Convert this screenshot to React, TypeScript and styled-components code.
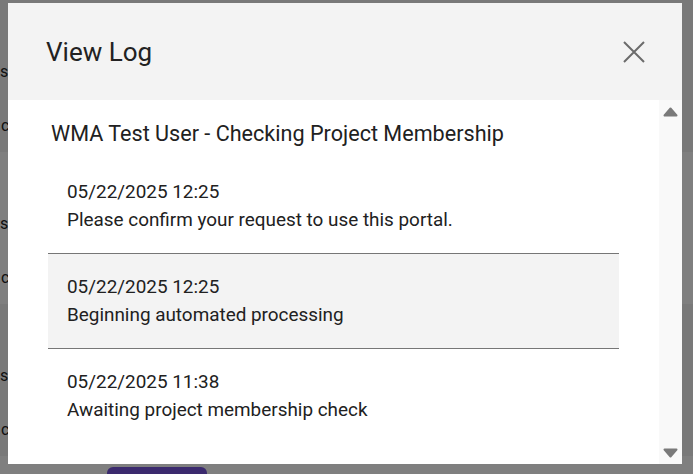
import React from "react";
import styled, { createGlobalStyle } from "styled-components";

const Global = createGlobalStyle`
  html, body { margin: 0; padding: 0; }
  body {
    width: 693px;
    height: 474px;
    overflow: hidden;
    font-family: Roboto, "Liberation Sans", sans-serif;
    background: #ffffff;
  }
`;

const Page = styled.div`
  display: flex;
  flex-direction: column;
  height: 474px;
  overflow: hidden;
`;

const PageRow = styled.div<{ $shade?: boolean }>`
  height: 152px;
  flex: none;
  display: flex;
  flex-direction: column;
  background: ${(p) => (p.$shade ? "#f2f2f2" : "#ffffff")};
  font-size: 16px;
  color: #222;
`;

const PageLabel = styled.div`
  margin-top: 62px;
  height: 20px;
  padding-left: 0;
  white-space: nowrap;
`;

const PageValue = styled.div`
  margin-top: 34px;
  padding-left: 1px;
  white-space: nowrap;
`;

const PageFooter = styled.div`
  padding: 11px 0 0 107px;
`;

const PageButton = styled.div`
  width: 100px;
  height: 36px;
  border-radius: 6px;
  background: #7754dc;
`;

const Overlay = styled.div`
  position: fixed;
  inset: 0;
  background: rgba(0, 0, 0, 0.5);
  padding: 3px 11px 10px 8px;
  display: flex;
`;

const Modal = styled.div`
  flex: 1;
  display: flex;
  flex-direction: column;
  background: #ffffff;
  overflow: hidden;
`;

const Header = styled.div`
  height: 97px;
  flex: none;
  background: #f3f3f3;
  display: flex;
  align-items: center;
  justify-content: space-between;
  padding: 0 37px 0 38px;
`;

const HeaderTitle = styled.h2`
  margin: 0;
  font-weight: 400;
  font-size: 26px;
  color: #222;
`;

const CloseButton = styled.button`
  border: 0;
  background: transparent;
  padding: 0;
  width: 22px;
  height: 22px;
  display: flex;
  cursor: pointer;
`;

const Body = styled.div`
  flex: 1;
  display: flex;
  min-height: 0;
`;

const Content = styled.div`
  flex: 1;
  overflow: hidden;
`;

const Title = styled.h3`
  margin: 0;
  padding: 22px 0 13px 43px;
  font-size: 21.6px;
  line-height: 24px;
  font-weight: 400;
  color: #212121;
`;

const List = styled.ul`
  list-style: none;
  margin: 0 40px;
  padding: 0;
`;

const Entry = styled.li<{ $shade?: boolean; $last?: boolean }>`
  padding: 19px;
  background: ${(p) => (p.$shade ? "#f3f3f3" : "#ffffff")};
  border-bottom: ${(p) => (p.$last ? "none" : "1px solid #767676")};
  font-size: 18.9px;
  line-height: 28px;
  color: #212121;
`;

const EntryLine = styled.div``;

const ScrollTrack = styled.div`
  width: 23px;
  flex: none;
  background: #f9f9f9;
  display: flex;
  flex-direction: column;
  justify-content: space-between;
  align-items: center;
  padding: 7px 0 6px;
`;

const Arrow = ({ down }: { down?: boolean }) => (
  <svg width="15" height="10" viewBox="0 0 15 10">
    <path
      d={down ? "M1.5 1.5 H13.5 L7.5 8.5 Z" : "M1.5 8.5 H13.5 L7.5 1.5 Z"}
      fill="#7a7a7a"
      stroke="#7a7a7a"
      strokeWidth="2"
      strokeLinejoin="round"
    />
  </svg>
);

const entries = [
  { date: "05/22/2025 12:25", text: "Please confirm your request to use this portal." },
  { date: "05/22/2025 12:25", text: "Beginning automated processing" },
  { date: "05/22/2025 11:38", text: "Awaiting project membership check" },
];

export default function App() {
  return (
    <>
      <Global />
      <Page aria-hidden="true">
        <PageRow $shade>
          <PageLabel>s</PageLabel>
          <PageValue>c</PageValue>
        </PageRow>
        <PageRow>
          <PageLabel>s</PageLabel>
          <PageValue>c</PageValue>
        </PageRow>
        <PageRow $shade>
          <PageLabel>s</PageLabel>
          <PageValue>c</PageValue>
        </PageRow>
        <PageFooter>
          <PageButton />
        </PageFooter>
      </Page>
      <Overlay>
        <Modal role="dialog" aria-label="View Log">
          <Header>
            <HeaderTitle>View Log</HeaderTitle>
            <CloseButton aria-label="Close">
              <svg width="22" height="22" viewBox="0 0 22 22">
                <path d="M1 1 L21 21 M21 1 L1 21" stroke="#6b6b6b" strokeWidth="2" />
              </svg>
            </CloseButton>
          </Header>
          <Body>
            <Content>
              <Title>WMA Test User - Checking Project Membership</Title>
              <List>
                {entries.map((e, i) => (
                  <Entry key={i} $shade={i === 1} $last={i === entries.length - 1}>
                    <EntryLine>{e.date}</EntryLine>
                    <EntryLine>{e.text}</EntryLine>
                  </Entry>
                ))}
              </List>
            </Content>
            <ScrollTrack>
              <Arrow />
              <Arrow down />
            </ScrollTrack>
          </Body>
        </Modal>
      </Overlay>
    </>
  );
}
